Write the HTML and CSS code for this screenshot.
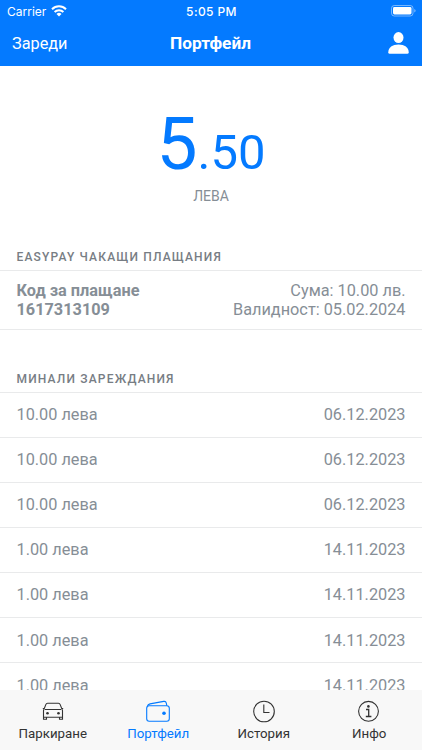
FILE: index.html
```
<!DOCTYPE html>
<html lang="bg">
<head>
  <meta charset="UTF-8">
  <meta name="viewport" content="width=device-width, initial-scale=1.0">
  <title>Портфейл</title>
  <link rel="stylesheet" href="styles.css">
</head>
<body>
  <header class="header">
    <div class="status-bar">
      <div class="carrier">
        <span>Carrier</span>
        <svg width="16" height="12" viewBox="0 0 16 12" fill="none" stroke="#fff" stroke-width="2">
          <path d="M1 4.2a10 10 0 0 1 14 0"/>
          <path d="M3.6 7a6.3 6.3 0 0 1 8.8 0"/>
          <path d="M5.5 9a3.6 3.6 0 0 1 5 0L8 11.6z" fill="#fff" stroke="none"/>
        </svg>
      </div>
      <div class="clock">5:05 PM</div>
      <div class="battery">
        <svg width="25" height="12" viewBox="0 0 25 12">
          <rect x="0.5" y="0.5" width="21.5" height="10.5" rx="2.8" fill="none" stroke="#fff" stroke-opacity="0.45"/>
          <rect x="2" y="2" width="18.5" height="7.5" rx="1.4" fill="#fff"/>
          <path d="M23.3 4v3.6q1.3-.5 1.3-1.8T23.3 4z" fill="#fff" fill-opacity="0.5"/>
        </svg>
      </div>
    </div>
    <div class="nav-bar">
      <a class="nav-link">Зареди</a>
      <h1>Портфейл</h1>
      <svg class="profile" width="21" height="22" viewBox="0 0 21 22" fill="#fff">
        <ellipse cx="10.5" cy="5.6" rx="5" ry="5.5"/>
        <path d="M.3 20.3C.3 15.5 4.5 12.6 10.5 12.6s10.2 2.9 10.2 7.7q0 1.5-1.4 1.5H1.7Q.3 21.8.3 20.3z"/>
      </svg>
    </div>
  </header>

  <main class="content">
    <section class="balance">
      <div class="amount">5<span>.50</span></div>
      <div class="currency">ЛЕВА</div>
    </section>

    <h2 class="pending-title">EASYPAY ЧАКАЩИ ПЛАЩАНИЯ</h2>
    <div class="row pending">
      <div class="code">Код за плащане<br>1617313109</div>
      <div class="details">Сума: 10.00 лв.<br>Валидност: 05.02.2024</div>
    </div>

    <h2 class="history-title">МИНАЛИ ЗАРЕЖДАНИЯ</h2>
    <div class="row"><span>10.00 лева</span><span>06.12.2023</span></div>
    <div class="row"><span>10.00 лева</span><span>06.12.2023</span></div>
    <div class="row"><span>10.00 лева</span><span>06.12.2023</span></div>
    <div class="row"><span>1.00 лева</span><span>14.11.2023</span></div>
    <div class="row"><span>1.00 лева</span><span>14.11.2023</span></div>
    <div class="row"><span>1.00 лева</span><span>14.11.2023</span></div>
    <div class="row"><span>1.00 лева</span><span>14.11.2023</span></div>
  </main>

  <nav class="tabs">
    <a class="tab">
      <svg width="24" height="24" viewBox="0 0 24 24" fill="none" stroke="currentColor" stroke-width="1.1">
        <path d="M2.5 10.5 4.8 4.6Q5.3 3.2 6.6 3.2h10.8q1.3 0 1.8 1.4l2.3 5.9v8.7h-3v-2H5.5v2h-3zM4 9.5h16M5.5 17.2h-3M18.5 17.2h3M1.8 8.5h1.5M20.7 8.5h1.5"/>
        <circle cx="6.5" cy="13.3" r="1.3" fill="currentColor" stroke="none"/>
        <circle cx="17.5" cy="13.3" r="1.3" fill="currentColor" stroke="none"/>
      </svg>
      <span>Паркиране</span>
    </a>
    <a class="tab active">
      <svg width="24" height="24" viewBox="0 0 24 24" fill="none" stroke="currentColor" stroke-width="1.1">
        <rect x="0.7" y="5.7" width="22.6" height="15.6" rx="2.5"/>
        <path d="M1.3 6.5Q1.8 4.3 4 3.9L17.7 1.4Q19.9 1 20.3 3.1L20.8 5.7"/>
        <circle cx="18" cy="13.2" r="1.8" fill="currentColor" stroke="none"/>
      </svg>
      <span>Портфейл</span>
    </a>
    <a class="tab">
      <svg width="24" height="24" viewBox="0 0 24 24" fill="none" stroke="currentColor" stroke-width="1.1">
        <circle cx="12" cy="11.5" r="10.3"/>
        <path d="M11.8 4.5v8h5.7"/>
      </svg>
      <span>История</span>
    </a>
    <a class="tab">
      <svg width="24" height="24" viewBox="0 0 24 24" fill="none" stroke="currentColor" stroke-width="1.1">
        <circle cx="11.5" cy="11.3" r="9.9"/>
        <path d="M9 9.5h2.7v7M8.8 16.5h5.6" stroke-width="1.3"/>
        <circle cx="11.4" cy="6.4" r="1.3" fill="currentColor" stroke="none"/>
      </svg>
      <span>Инфо</span>
    </a>
  </nav>
</body>
</html>
```
FILE: styles.css
```
* {
  box-sizing: border-box;
}
body {
  margin: 0;
  height: 750px;
  display: flex;
  flex-direction: column;
  overflow: hidden;
  font-family: Roboto, sans-serif;
  background: #fff;
  color: #868e96;
}
.header {
  flex: none;
  height: 65.5px;
  background: #047aff;
  color: #fff;
}
.status-bar {
  height: 22px;
  padding: 0 6px 0 7px;
  display: grid;
  grid-template-columns: 1fr auto 1fr;
  align-items: center;
  font-family: Inter, sans-serif;
  font-size: 12px;
}
.carrier {
  display: flex;
  align-items: center;
  gap: 5px;
}
.clock {
  font-weight: 500;
  letter-spacing: 0.4px;
}
.battery {
  display: flex;
  justify-content: flex-end;
}
.nav-bar {
  height: 42px;
  padding: 0 13px 0 12px;
  display: grid;
  grid-template-columns: 1fr auto 1fr;
  align-items: center;
  font-size: 16.3px;
}
.nav-bar h1 {
  margin: 0;
  font-size: 17.3px;
  font-weight: 700;
}
.profile {
  justify-self: end;
}
.content {
  flex: 1;
  min-height: 0;
  overflow: hidden;
}
.balance {
  padding-top: 36px;
  text-align: center;
}
.amount {
  height: 85px;
  line-height: 84px;
  font-size: 73px;
  color: #047aff;
}
.amount span {
  font-size: 49px;
}
.currency {
  line-height: 18px;
  font-size: 14px;
}
h2 {
  margin: 0;
  padding-left: 16.5px;
  font-size: 12px;
  line-height: 16px;
  font-weight: 500;
  letter-spacing: 1.17px;
  color: #777d84;
}
.pending-title {
  margin-top: 44px;
  margin-bottom: 5px;
}
.history-title {
  margin-top: 41px;
  margin-bottom: 5px;
}
.row {
  height: 45.1px;
  padding: 0 16.5px;
  display: flex;
  align-items: center;
  justify-content: space-between;
  border-top: 1px solid #e9eaeb;
  font-size: 16.3px;
}
.pending {
  height: 60px;
  line-height: 19px;
  border-bottom: 1px solid #e9eaeb;
}
.code {
  font-weight: 700;
}
.details {
  text-align: right;
}
.tabs {
  flex: none;
  height: 60px;
  display: grid;
  grid-template-columns: repeat(4, 1fr);
  background: #f8f8f8;
  color: #333;
}
.tab {
  padding-top: 10px;
  display: flex;
  flex-direction: column;
  align-items: center;
  font-size: 13.3px;
  line-height: 20px;
}
.active {
  color: #047aff;
}
```
